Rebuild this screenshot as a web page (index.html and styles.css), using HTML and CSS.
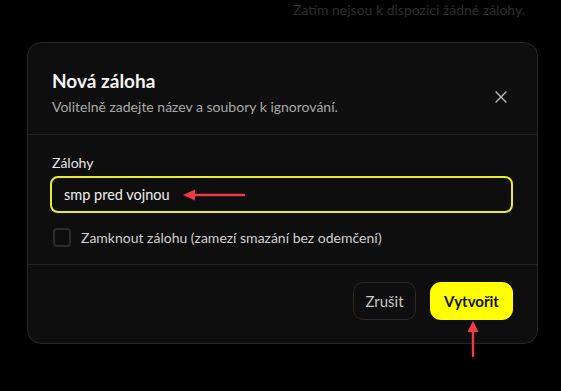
FILE: index.html
```html
<!DOCTYPE html>
<html lang="cs">
<head>
    <meta charset="UTF-8">
    <meta name="viewport" content="width=device-width, initial-scale=1.0">
    <title>Nová záloha</title>
    <link rel="stylesheet" href="styles.css">
</head>
<body>
    <p class="empty-note">Zatím nejsou k dispozici žádné zálohy.</p>

    <div class="modal">
        <div class="modal-header">
            <div class="modal-titles">
                <h2>Nová záloha</h2>
                <p class="modal-subtitle">Volitelně zadejte název a soubory k ignorování.</p>
            </div>
            <button class="close-btn" aria-label="Zavřít">
                <svg width="12" height="12" viewBox="0 0 12 12"><path d="M1 1L11 11M11 1L1 11" stroke="#bdbdbd" stroke-width="1.4" stroke-linecap="round"/></svg>
            </button>
        </div>

        <div class="modal-body">
            <label for="backup-name">Zálohy</label>
            <div class="input-wrap">
                <input type="text" id="backup-name" value="smp pred vojnou">
                <svg class="arrow-left" width="64" height="14" viewBox="0 0 64 14"><path d="M62 7H10" stroke="#ee3b45" stroke-width="2.4" stroke-linecap="round"/><path d="M1 7L13 1.5V12.5Z" fill="#ee3b45"/></svg>
            </div>
            <label class="check-row">
                <span class="checkbox"></span>
                Zamknout zálohu (zamezí smazání bez odemčení)
            </label>
        </div>

        <div class="modal-footer">
            <button class="cancel-btn">Zrušit</button>
            <button class="create-btn">Vytvořit</button>
            <svg class="arrow-up" width="14" height="38" viewBox="0 0 14 38"><path d="M7 36V10" stroke="#ee3b45" stroke-width="2.4" stroke-linecap="round"/><path d="M7 1L12.5 12H1.5Z" fill="#ee3b45"/></svg>
        </div>
    </div>
</body>
</html>
```

FILE: styles.css
```css
body {
    font-family: Lato, "Liberation Sans", sans-serif;
    margin: 0;
    padding: 0;
    background-color: #000;
    color: #ececec;
    width: 561px;
    height: 391px;
    overflow: hidden;
}
.empty-note {
    margin: 0;
    padding: 1px 36px 0 0;
    text-align: right;
    font-size: 14px;
    line-height: 18px;
    color: #2e2e2e;
}
.modal {
    margin: 23px 0 0 27px;
    width: 509px;
    background-color: #0f0e0e;
    border: 1px solid #262626;
    border-radius: 14px;
}
.modal-header {
    display: flex;
    align-items: center;
    justify-content: space-between;
    padding: 26px 30px 18px 24px;
    border-bottom: 1px solid #232323;
}
.modal-header h2 {
    margin: 0;
    font-size: 19px;
    line-height: 24px;
    font-weight: 700;
    color: #f2f2f2;
}
.modal-subtitle {
    margin: 5px 0 0;
    font-size: 14px;
    line-height: 18px;
    color: #a9a9a9;
}
.close-btn {
    background: none;
    border: none;
    padding: 0;
    margin-top: 8px;
    width: 12px;
    height: 12px;
    display: flex;
    cursor: pointer;
}
.modal-body {
    padding: 19px 24px 17px 22px;
    border-bottom: 1px solid #232323;
}
.modal-body > label {
    display: block;
    font-size: 14px;
    line-height: 18px;
    color: #e6e6e6;
    padding-left: 2px;
}
.input-wrap {
    position: relative;
    margin-top: 4px;
}
.input-wrap input {
    box-sizing: border-box;
    width: 100%;
    height: 37px;
    padding: 0 12px;
    background-color: #0f0e0e;
    border: 2px solid #e9ec2a;
    border-radius: 8px;
    font-family: inherit;
    font-size: 14.5px;
    color: #f0f0f0;
    outline: none;
}
.arrow-left {
    position: absolute;
    left: 132px;
    top: 12px;
}
.check-row {
    display: flex !important;
    align-items: center;
    gap: 10px;
    margin-top: 15px;
    font-size: 14.5px;
    line-height: 19px;
    color: #cfcfcf !important;
}
.checkbox {
    box-sizing: border-box;
    width: 18px;
    height: 19px;
    border: 2px solid #2d2d2d;
    border-radius: 4px;
    margin-left: 1px;
}
.modal-footer {
    position: relative;
    display: flex;
    justify-content: flex-end;
    gap: 14px;
    padding: 17px 24px 23px;
}
.cancel-btn {
    width: 63px;
    height: 38px;
    background-color: #0f0e0e;
    border: 1px solid #2a2a2a;
    border-radius: 10px;
    font-family: inherit;
    font-size: 15px;
    color: #c8c8c8;
    cursor: pointer;
}
.create-btn {
    width: 83px;
    height: 38px;
    background-color: #ffff00;
    border: none;
    border-radius: 11px;
    font-family: inherit;
    font-size: 15px;
    font-weight: 700;
    color: #111;
    cursor: pointer;
}
.arrow-up {
    position: absolute;
    right: 57px;
    top: 55px;
}
```
